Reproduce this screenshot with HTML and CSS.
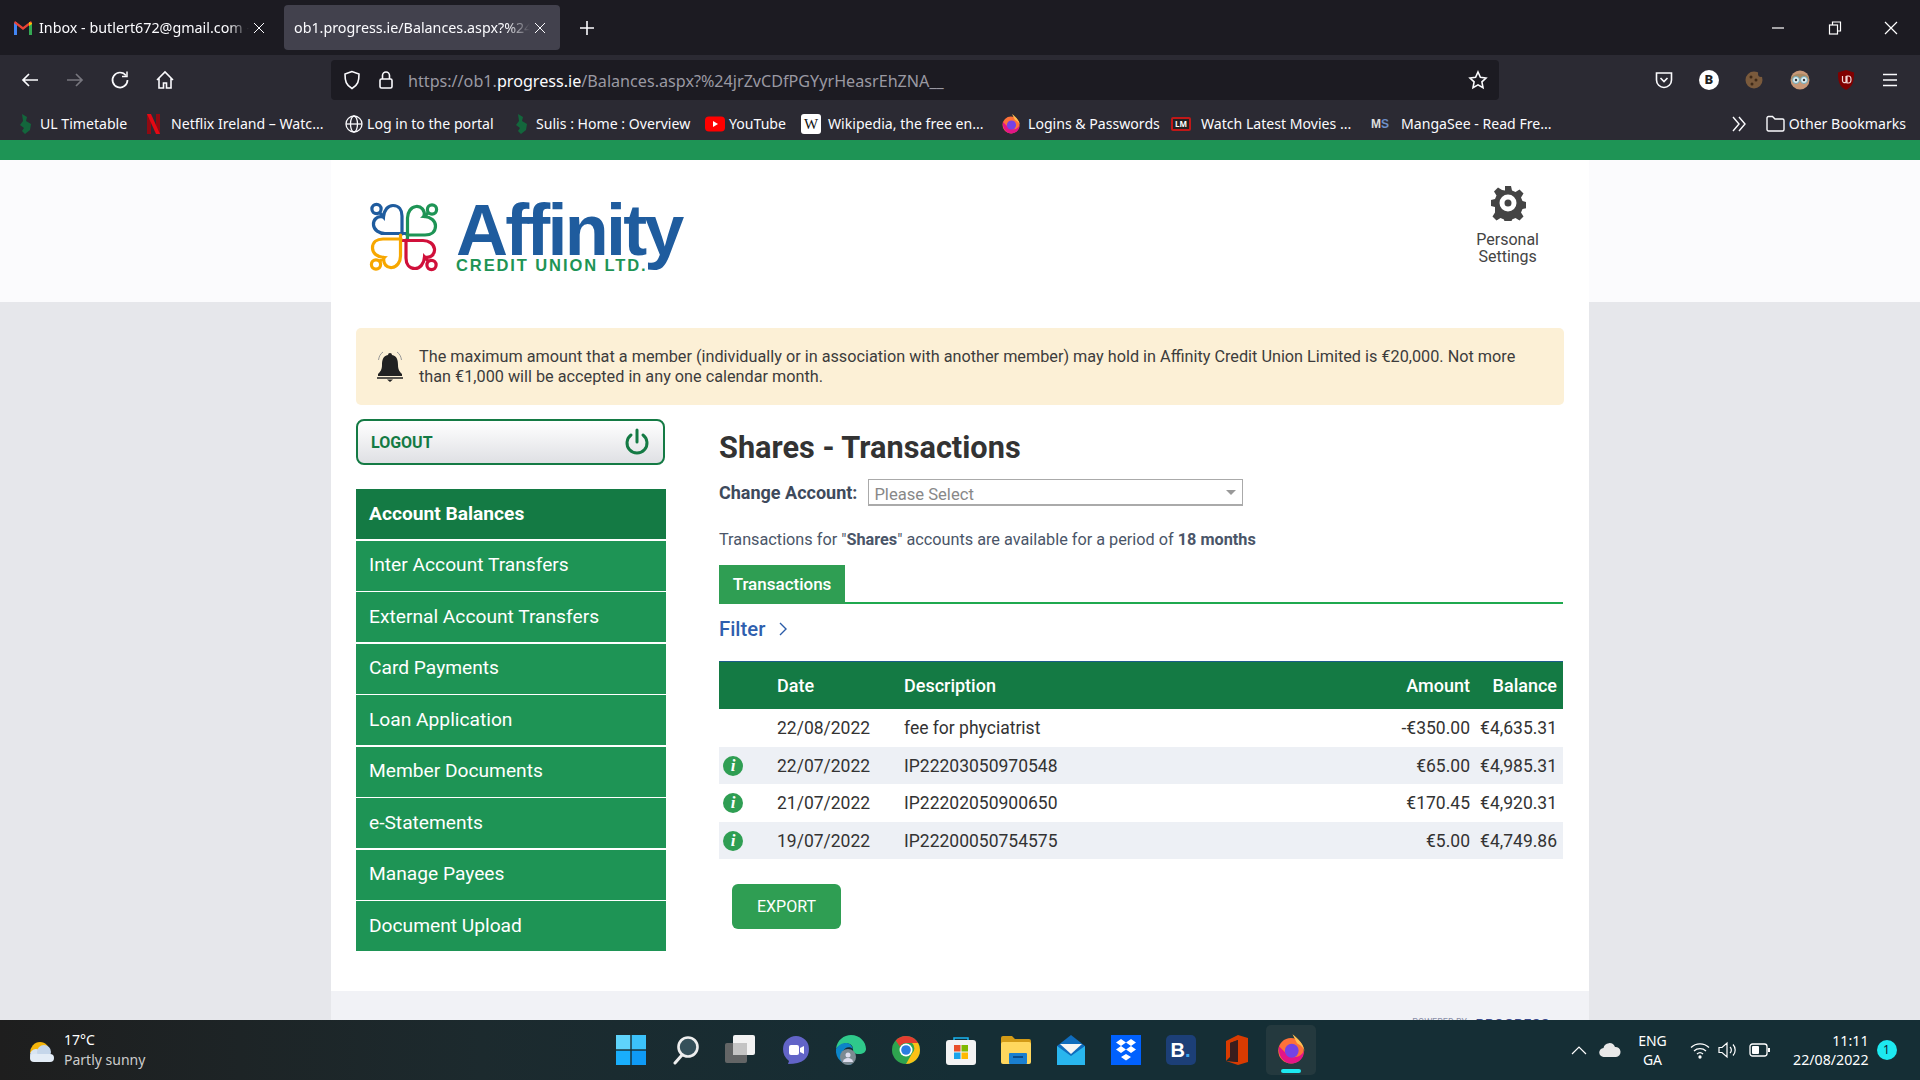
FILE: index.html
```html
<!DOCTYPE html>
<html lang="en">
<head>
    <meta charset="UTF-8">
    <title>Shares - Transactions</title>
    <link rel="stylesheet" href="styles.css">
</head>
<body>
    <svg class="defs" width="0" height="0">
        <defs>
            <g id="heart" fill="none" stroke-width="3.2" stroke-linecap="round">
                <circle cx="36.5" cy="37" r="4.6"/>
                <path d="M40 41 L43.5 45 C44 38 48 33.5 53 33.5 C59 33.5 62 38 62 44 L62 62"/>
                <path d="M43.5 45 C37 43.5 33 48 33.5 53 C34 58 39 61.5 45 61.5 L66 61.5"/>
            </g>
            <g id="ffox">
                <circle cx="10" cy="11" r="8.5" fill="#ff7139"/>
                <path d="M11 0 C15 3 19 7 19 12 C19 9 16 7 14 6 Z" fill="#ffbd4f"/>
                <path d="M2 8 C1 14 5 20 11 19.5 C16 19 19 15 18.5 11 C17 16 9 17 6 12 Z" fill="#e31587"/>
                <circle cx="10.5" cy="11" r="4.6" fill="#7542e5"/>
            </g>
            <path id="close" d="M1 1l10 10M11 1L1 11" stroke="#fbfbfe" stroke-width="1"/>
        </defs>
    </svg>

    <div class="tabbar">
        <div class="tab tab-first">
            <svg class="favicon" width="18" height="14" viewBox="0 0 18 14"><path d="M0 14V2l3-1v13z" fill="#4285f4"/><path d="M15 14V1l3 1v12z" fill="#34a853"/><path d="M0 2 9 9l9-7-1-2-8 6-8-6z" fill="#ea4335"/><path d="M15 1l3 1v1l-3 2z" fill="#fbbc04"/></svg>
            <span class="tab-title">Inbox - butlert672@gmail.com -</span>
            <svg class="tab-x" width="12" height="12" viewBox="0 0 12 12"><use href="#close"/></svg>
        </div>
        <div class="tab tab-active">
            <span class="tab-title">ob1.progress.ie/Balances.aspx?%24j</span>
            <svg class="tab-x" width="12" height="12" viewBox="0 0 12 12"><use href="#close"/></svg>
        </div>
        <svg class="newtab" width="14" height="14" viewBox="0 0 14 14"><path d="M7 0v14M0 7h14" stroke="#fbfbfe" stroke-width="1.6"/></svg>
        <div class="winctl">
            <svg width="14" height="14" viewBox="0 0 14 14"><path d="M1 7h12" stroke="#fff" stroke-width="1.2"/></svg>
            <svg width="14" height="14" viewBox="0 0 14 14" fill="none" stroke="#fff" stroke-width="1.2"><rect x="1.5" y="4" width="8" height="9"/><path d="M4.5 4V1h8v9h-3"/></svg>
            <svg width="14" height="14" viewBox="0 0 14 14"><path d="M1 1l12 12M13 1L1 13" stroke="#fff" stroke-width="1.2"/></svg>
        </div>
    </div>

    <div class="toolbar">
        <div class="navbtns">
            <svg width="20" height="20" viewBox="0 0 20 20" fill="none" stroke="#fbfbfe" stroke-width="1.7"><path d="M18 10H3M9 4l-6 6 6 6"/></svg>
            <svg width="20" height="20" viewBox="0 0 20 20" fill="none" stroke="#77767e" stroke-width="1.7"><path d="M2 10h15M11 4l6 6-6 6"/></svg>
            <svg width="20" height="20" viewBox="0 0 20 20" fill="none" stroke="#fbfbfe" stroke-width="1.7"><path d="M16 5.5A7.5 7.5 0 1 0 17.5 10"/><path d="M17 1.5v5h-5" stroke-width="1.5"/></svg>
            <svg width="20" height="20" viewBox="0 0 20 20" fill="none" stroke="#fbfbfe" stroke-width="1.6"><path d="M2 10 10 2l8 8M4 8.5V18h4.5v-5h3v5H16V8.5"/></svg>
        </div>
        <div class="urlbar">
            <svg width="18" height="20" viewBox="0 0 18 20" fill="none" stroke="#fbfbfe" stroke-width="1.6"><path d="M9 1.5 2 4c0 7 1 11 7 14.5C15 15 16 11 16 4z"/></svg>
            <svg width="16" height="20" viewBox="0 0 16 20" fill="none" stroke="#fbfbfe" stroke-width="1.6"><rect x="2" y="9" width="12" height="9" rx="1.5"/><path d="M4.5 9V5.5a3.5 3.5 0 0 1 7 0V9"/></svg>
            <span class="url">https://ob1.<b>progress.ie</b>/Balances.aspx?%24jrZvCDfPGYyrHeasrEhZNA__</span>
            <svg class="star" width="20" height="20" viewBox="0 0 20 20" fill="none" stroke="#fbfbfe" stroke-width="1.6"><path d="M10 2l2.4 5.3 5.6.7-4.1 3.9 1.1 5.8L10 14.9l-5 2.8 1.1-5.8L2 8l5.6-.7z"/></svg>
        </div>
        <div class="exticons">
            <svg width="20" height="20" viewBox="0 0 20 20" fill="none" stroke="#fbfbfe" stroke-width="1.6"><path d="M2.5 3h15v7a7.5 7.5 0 0 1-15 0z"/><path d="M6.5 8l3.5 3.5L13.500 8"/></svg>
            <span class="ext-b">B</span>
            <svg width="20" height="20" viewBox="0 0 20 20"><circle cx="10" cy="10" r="8.500" fill="#7a5a3c"/><circle cx="7" cy="7" r="1.500" fill="#3f2a18"/><circle cx="12" cy="10" r="1.500" fill="#3f2a18"/><circle cx="8" cy="14" r="1.500" fill="#3f2a18"/><circle cx="17" cy="4" r="3" fill="#2b2a33"/></svg>
            <svg width="22" height="22" viewBox="0 0 22 22"><circle cx="11" cy="11" r="9.500" fill="#c89878"/><path d="M2 10C3 3 19 3 20 10z" fill="#a98a64"/><circle cx="7" cy="11" r="3.500" fill="#dfeef2" stroke="#6fa9b8"/><circle cx="15" cy="11" r="3.500" fill="#dfeef2" stroke="#6fa9b8"/><circle cx="7" cy="11" r="1.200" fill="#333"/><circle cx="15" cy="11" r="1.200" fill="#333"/></svg>
            <svg width="20" height="22" viewBox="0 0 20 22"><path d="M10 1 18 3.500c0 9-1 14-8 17.500C3 17.500 2 12.500 2 3.500z" fill="#800000"/><path d="M6.500 7v5a2 2 0 0 0 3.500 1V7M11 7v7h1.500a2.500 3.500 0 0 0 0-7z" fill="none" stroke="#f3d6d6" stroke-width="1.200"/></svg>
            <svg width="18" height="16" viewBox="0 0 18 16"><path d="M2 2.500h14M2 8h14M2 13.500h14" stroke="#fbfbfe" stroke-width="1.700"/></svg>
        </div>
    </div>

    <div class="bookmarks">
        <span class="bm"><svg width="15" height="22" viewBox="0 0 15 22"><path d="M4 1 9 4l-1 4 5 3-1 6-5 4-3-3 2-3-4-3 3-4z" fill="#13663c"/></svg>UL Timetable</span>
        <span class="bm bm-netflix"><svg width="13" height="20" viewBox="0 0 13 20"><path d="M0 0h4v20H0zM9 0h4v20H9z" fill="#8f0a12"/><path d="M0 0h4l9 20H9z" fill="#e50914"/></svg>Netflix Ireland – Watc...</span>
        <span class="bm bm-tight"><svg width="18" height="18" viewBox="0 0 18 18" fill="none" stroke="#fbfbfe" stroke-width="1.300"><circle cx="9" cy="9" r="8"/><ellipse cx="9" cy="9" rx="3.500" ry="8"/><path d="M1 9h16"/></svg>Log in to the portal</span>
        <span class="bm"><svg width="15" height="22" viewBox="0 0 15 22"><path d="M4 1 9 4l-1 4 5 3-1 6-5 4-3-3 2-3-4-3 3-4z" fill="#13663c"/></svg>Sulis : Home : Overview</span>
        <span class="bm bm-tight"><svg width="20" height="16" viewBox="0 0 20 16"><rect width="20" height="15" y=".5" rx="4" fill="#f00"/><path d="M8 5l5 3-5 3z" fill="#fff"/></svg>YouTube</span>
        <span class="bm"><span class="wiki">W</span>Wikipedia, the free en...</span>
        <span class="bm"><svg width="20" height="20" viewBox="0 0 20 20"><use href="#ffox"/></svg>Logins &amp; Passwords</span>
        <span class="bm"><span class="lm">LM</span>Watch Latest Movies ...</span>
        <span class="bm"><span class="ms">M<i>S</i></span>MangaSee - Read Fre...</span>
        <span class="bm-right">
            <svg width="16" height="16" viewBox="0 0 16 16" fill="none" stroke="#fbfbfe" stroke-width="1.400"><path d="M2 1l6 7-6 7M8 1l6 7-6 7"/></svg>
            <svg class="folder" width="19" height="17" viewBox="0 0 19 17" fill="none" stroke="#fbfbfe" stroke-width="1.400"><path d="M1 3a1.500 1.500 0 0 1 1.500-1.500h4L9 4h7.500A1.500 1.500 0 0 1 18 5.500v9a1.500 1.500 0 0 1-1.500 1.500h-14A1.500 1.500 0 0 1 1 14.500z"/></svg>
            Other Bookmarks
        </span>
    </div>

    <div class="page">
        <div class="wrapper">
            <header class="site-head">
                <div class="logo">
                    <svg class="logo-mark" width="72" height="72" viewBox="28 28 72 72">
                        <use href="#heart" stroke="#1f5c9e"/>
                        <use href="#heart" stroke="#1e9455" transform="rotate(90 64 65)"/>
                        <use href="#heart" stroke="#d0103a" transform="rotate(180 64 65)"/>
                        <use href="#heart" stroke="#f7a700" transform="rotate(270 64 65)"/>
                    </svg>
                    <div class="logo-text">
                        <div class="logo-name">Affinity</div>
                        <div class="logo-sub">CREDIT UNION LTD.</div>
                    </div>
                </div>
                <div class="settings">
                    <svg width="36" height="36" viewBox="0 0 36 36"><path fill="#444" fill-rule="evenodd" d="M15 1h6l1 4.500 3.500 1.500 4-2.500 4 4-2.500 4 1.500 3.500 4 1v6l-4 1-1.500 3.500 2.500 4-4 4-4-2.500-3.500 1.500-1 4h-6l-1-4-3.500-1.500-4 2.500-4-4 2.500-4L5 22l-4-1v-6l4-1 1.500-3.500-2.500-4 4-4 4 2.500L15 5.500zM18 9.500a8.500 8.500 0 1 0 0 17 8.500 8.500 0 0 0 0-17zM18 14.500a3.500 3.500 0 1 1 0 7 3.500 3.500 0 0 1 0-7z"/></svg>
                    <div class="settings-label">Personal<br>Settings</div>
                </div>
            </header>

            <div class="content">
                <div class="alert">
                    <svg class="bell" width="32" height="34" viewBox="0 0 32 34"><path d="M16 3a2 2 0 0 1 2 2c5 1 6 5 6 10 0 5 2 7 4 9v2H4v-2c2-2 4-4 4-9 0-5 1-9 6-10a2 2 0 0 1 2-2z" fill="#222"/><path d="M3 28h26" stroke="#222" stroke-width="1.500"/><path d="M13 29.500h6l-3 2.500z" fill="#222"/><path d="M9 2C6 4 5 7 4.500 10M23 2c3 2 4 5 4.500 8" fill="none" stroke="#999" stroke-width="1"/></svg>
                    <p>The maximum amount that a member (individually or in association with another member) may hold in Affinity Credit Union Limited is €20,000. Not more than €1,000 will be accepted in any one calendar month.</p>
                </div>

                <div class="columns">
                    <aside class="side">
                        <div class="logout">
                            <span>LOGOUT</span>
                            <svg width="26" height="28" viewBox="0 0 26 28" fill="none" stroke="#147a44" stroke-width="3" stroke-linecap="round"><path d="M13 2v12"/><path d="M7 7a10 10 0 1 0 12 0"/></svg>
                        </div>
                        <nav class="menu">
                            <a class="menu-item menu-active">Account Balances</a>
                            <a class="menu-item">Inter Account Transfers</a>
                            <a class="menu-item">External Account Transfers</a>
                            <a class="menu-item">Card Payments</a>
                            <a class="menu-item">Loan Application</a>
                            <a class="menu-item">Member Documents</a>
                            <a class="menu-item">e-Statements</a>
                            <a class="menu-item">Manage Payees</a>
                            <a class="menu-item">Document Upload</a>
                        </nav>
                    </aside>

                    <main class="main">
                        <h1>Shares - Transactions</h1>
                        <div class="account-row">
                            <label>Change Account:</label>
                            <div class="select">Please Select<span class="caret"></span></div>
                        </div>
                        <p class="note">Transactions for "<b>Shares</b>" accounts are available for a period of <b>18 months</b></p>
                        <div class="tabs"><span class="tabs-item">Transactions</span></div>
                        <div class="filter">Filter <svg width="12" height="18" viewBox="0 0 12 18" fill="none" stroke="#2a5ba8" stroke-width="1.400"><path d="M3 3l6 6-6 6"/></svg></div>
                        <table class="tx">
                            <thead>
                                <tr><th class="c-info"></th><th class="c-date">Date</th><th>Description</th><th class="c-amt">Amount</th><th class="c-bal">Balance</th></tr>
                            </thead>
                            <tbody>
                                <tr><td></td><td>22/08/2022</td><td>fee for phyciatrist</td><td class="c-amt">-€350.00</td><td class="c-bal">€4,635.31</td></tr>
                                <tr><td><span class="info">i</span></td><td>22/07/2022</td><td>IP22203050970548</td><td class="c-amt">€65.00</td><td class="c-bal">€4,985.31</td></tr>
                                <tr><td><span class="info">i</span></td><td>21/07/2022</td><td>IP22202050900650</td><td class="c-amt">€170.45</td><td class="c-bal">€4,920.31</td></tr>
                                <tr><td><span class="info">i</span></td><td>19/07/2022</td><td>IP22200050754575</td><td class="c-amt">€5.00</td><td class="c-bal">€4,749.86</td></tr>
                            </tbody>
                        </table>
                        <button class="export">EXPORT</button>
                    </main>
                </div>
            </div>

            <footer class="site-foot">
                <span class="powered">POWERED BY</span>
                <b class="powered-name">PROGRESS</b>
            </footer>
        </div>
    </div>

    <div class="taskbar">
        <div class="weather">
            <svg width="30" height="26" viewBox="0 0 30 26"><path d="M5 16a10 11 0 0 1 20 0z" fill="#f5b50a"/><circle cx="11" cy="18" r="6" fill="#d8e4f2"/><circle cx="19" cy="15" r="7" fill="#c5d6ea"/><rect x="5" y="17" width="24" height="8" rx="4" fill="#e3ecf6"/></svg>
            <div class="weather-text"><div>17°C</div><div class="weather-sub">Partly sunny</div></div>
        </div>
        <div class="apps">
            <span class="app"><svg width="30" height="30" viewBox="0 0 30 30"><rect width="14.300" height="14.300" fill="#5fd4fb"/><rect x="15.700" width="14.300" height="14.300" fill="#3cc2fa"/><rect y="15.700" width="14.300" height="14.300" fill="#19aefc"/><rect x="15.700" y="15.700" width="14.300" height="14.300" fill="#0f9af5"/></svg></span>
            <span class="app"><svg width="28" height="30" viewBox="0 0 28 30"><circle cx="16" cy="12" r="9.500" fill="#35505a" stroke="#eee" stroke-width="2.600"/><path d="M10 20 3 28" stroke="#eee" stroke-width="3" stroke-linecap="round"/></svg></span>
            <span class="app"><svg width="32" height="30" viewBox="0 0 32 30"><rect x="8" width="22" height="20" rx="2" fill="#f2f2f2"/><rect y="8" width="22" height="20" rx="2" fill="#6c6c6c" opacity=".9"/><rect x="8" y="8" width="14" height="12" fill="#c4c4c4"/></svg></span>
            <span class="app"><svg width="28" height="30" viewBox="0 0 28 30"><path d="M14 1a13 13 0 0 1 13 13c0 9-6 15-21 15l1-3C3 23 1 19 1 14A13 13 0 0 1 14 1z" fill="#6264c7"/><rect x="7" y="10" width="10" height="10" rx="2" fill="#fff"/><path d="M18 13l4-2v8l-4-2z" fill="#fff"/></svg></span>
            <span class="app"><svg width="32" height="32" viewBox="0 0 32 32"><path d="M1 15C2 6 9 1 16 1c9 0 15 7 15 14 0 3-3 5-7 5-5 0-6-2-6-5 0-5-6-7-10-5-4 2-6 3-7 5z" fill="#2fc98b"/><path d="M1 15c2-3 5-6 10-6 3 0 6 2 7 6-3-3-9-2-10 3-1 6 4 11 9 13C8 31 0 25 1 15z" fill="#0c84c8"/><circle cx="13" cy="23" r="8" fill="#7c8a92"/><circle cx="13" cy="21" r="2.500" fill="#dde"/><path d="M8 28a5 4 0 0 1 10 0z" fill="#dde"/></svg></span>
            <span class="app"><svg width="28" height="28" viewBox="0 0 28 28"><circle cx="14" cy="14" r="14" fill="#2ea44f"/><path d="M14 0a14 14 0 0 1 12.100 7H14a7 7 0 0 0-6.100 3.500L3.700 4.500A14 14 0 0 1 14 0z" fill="#e53d30"/><path d="M26.100 7A14 14 0 0 1 14 28l6-10.500A7 7 0 0 0 20 7z" fill="#fbc116"/><circle cx="14" cy="14" r="6.500" fill="#fff"/><circle cx="14" cy="14" r="4.800" fill="#2a7de1"/></svg></span>
            <span class="app"><svg width="30" height="30" viewBox="0 0 30 30"><path d="M8 6V3h14v3" fill="none" stroke="#19b5f1" stroke-width="1.500"/><rect y="5" width="30" height="25" rx="3" fill="#f3f3f3"/><rect x="8" y="10" width="6.500" height="6.500" fill="#e8502a"/><rect x="15.500" y="10" width="6.500" height="6.500" fill="#7fb900"/><rect x="8" y="17.500" width="6.500" height="6.500" fill="#19a4ea"/><rect x="15.500" y="17.500" width="6.500" height="6.500" fill="#ffb900"/></svg></span>
            <span class="app"><svg width="30" height="28" viewBox="0 0 30 28"><path d="M0 2a2 2 0 0 1 2-2h9l3 3h14a2 2 0 0 1 2 2v3H0z" fill="#d39b17"/><rect y="6" width="30" height="22" rx="2" fill="#ffd75e"/><rect x="8" y="17" width="18" height="11" rx="1" fill="#1a7fd0"/><path d="M12 21h10" stroke="#0c4c8a" stroke-width="2"/></svg></span>
            <span class="app"><svg width="30" height="30" viewBox="0 0 30 30"><path d="M15 0 29 11v19H1V11z" fill="#0f6cbd"/><path d="M4 9h22L15 19z" fill="#f5f5f5"/><path d="M1 11l14 10 14-10v19H1z" fill="#29b6ee"/></svg></span>
            <span class="app"><svg width="30" height="30" viewBox="0 0 30 30"><rect width="30" height="30" fill="#0061fe"/><path d="M10 4l5 3.500-5 3.500-5-3.500zM20 4l5 3.500-5 3.500-5-3.500zM10 11l5 3.500-5 3.500-5-3.500zM20 11l5 3.500-5 3.500-5-3.500zM15 19l5 3-5 3.500-5-3.500z" fill="#fff"/></svg></span>
            <span class="app"><span class="booking">B<i>.</i></span></span>
            <span class="app"><svg width="24" height="30" viewBox="0 0 24 30"><path d="M14 0 24 3v24l-10 3-12-4 12 1V5L6 8v14l-4 4V6z" fill="#d83b01"/><path d="M6 8l8-3v22l-8-1z" fill="#3a1d1d"/></svg></span>
            <span class="app app-on"><svg width="30" height="32" viewBox="0 0 20 21"><use href="#ffox"/></svg><span class="app-dot"></span></span>
        </div>
        <div class="tray">
            <svg class="tray-up" width="16" height="10" viewBox="0 0 16 10" fill="none" stroke="#fff" stroke-width="1.200"><path d="M1 9l7-7 7 7"/></svg>
            <svg class="tray-cloud" width="22" height="14" viewBox="0 0 22 14"><path d="M5 14a4.500 4.500 0 0 1-.5-9A6 6 0 0 1 16 4a5 5 0 0 1 1 10z" fill="#e8e8e8"/></svg>
            <div class="lang">ENG<br>GA</div>
            <svg class="tray-wifi" width="20" height="18" viewBox="0 0 20 18" fill="none" stroke="#fff" stroke-width="1.300"><path d="M1 6.500a13 13 0 0 1 18 0M4 10a9 9 0 0 1 12 0M7 13a4.500 4.500 0 0 1 6 0"/><circle cx="10" cy="16" r="1" fill="#fff"/></svg>
            <svg class="tray-vol" width="20" height="18" viewBox="0 0 20 18" fill="none" stroke="#fff" stroke-width="1.200"><path d="M1 6.500h3L9 2v14l-5-4.500H1zM12 6a4 4 0 0 1 0 6M15 3.500a8 8 0 0 1 0 11"/></svg>
            <svg class="tray-bat" width="22" height="14" viewBox="0 0 22 14"><rect x="1" y="1" width="17" height="12" rx="2.500" fill="none" stroke="#fff" stroke-width="1.300"/><rect x="3" y="3" width="7" height="8" rx="1" fill="#fff"/><rect x="19" y="5" width="2" height="4" fill="#fff"/></svg>
            <div class="clock">11:11<br>22/08/2022</div>
            <span class="badge">1</span>
        </div>
    </div>
</body>
</html>
```

FILE: styles.css
```css
* {
    box-sizing: border-box;
}
html, body {
    height: 100%;
}
body {
    margin: 0;
    display: flex;
    flex-direction: column;
    overflow: hidden;
    font-family: Roboto, "Liberation Sans", sans-serif;
    color: #333;
}
.defs {
    position: absolute;
}
svg {
    display: block;
    flex-shrink: 0;
}

/* browser chrome */
.tabbar {
    height: 55px;
    flex-shrink: 0;
    display: flex;
    align-items: center;
    background: #1c1b22;
    color: #fbfbfe;
    font-family: "Noto Sans", sans-serif;
    font-size: 14.3px;
}
.tab {
    width: 276px;
    height: 45px;
    padding: 0 14px 0 10px;
    display: flex;
    align-items: center;
    border-radius: 4px;
}
.tab-first {
    width: 284px;
    padding: 0 19px 0 14px;
}
.tab-active {
    background: #42414d;
}
.tab-title {
    flex: 1;
    min-width: 0;
    white-space: nowrap;
    overflow: hidden;
    -webkit-mask-image: linear-gradient(to right, #000 90%, transparent);
    mask-image: linear-gradient(to right, #000 90%, transparent);
}
.favicon {
    margin-right: 7px;
}
.tab-x {
    margin-left: 4px;
}
.newtab {
    margin-left: 20px;
}
.winctl {
    margin-left: auto;
    width: 149px;
    padding-right: 22px;
    display: flex;
    justify-content: space-between;
}
.toolbar {
    height: 50px;
    flex-shrink: 0;
    display: flex;
    align-items: center;
    background: #2b2a33;
}
.navbtns {
    width: 331px;
    padding: 0 156px 0 20px;
    display: flex;
    justify-content: space-between;
}
.urlbar {
    width: 1168px;
    height: 40px;
    padding: 0 11px 0 12px;
    display: flex;
    align-items: center;
    gap: 17px;
    border-radius: 4px;
    background: #1c1b22;
}
.url {
    margin: 2px 0 0 -3px;
    font-family: "Noto Sans", sans-serif;
    font-size: 16.15px;
    color: #9a99a2;
    white-space: nowrap;
}
.url b {
    font-weight: 400;
    color: #fbfbfe;
}
.star {
    margin-left: auto;
}
.exticons {
    flex: 1;
    padding: 0 21px 0 155px;
    display: flex;
    align-items: center;
    justify-content: space-between;
}
.ext-b {
    width: 20px;
    height: 20px;
    border-radius: 50%;
    background: #fff;
    color: #222;
    font-size: 13px;
    font-weight: 900;
    line-height: 20px;
    text-align: center;
}
.bookmarks {
    height: 35px;
    flex-shrink: 0;
    padding: 2px 0 0 18px;
    display: grid;
    grid-template-columns: 129px 198px 169px 191px 96px 200px 170px 200px 1fr auto;
    align-items: center;
    background: #2b2a33;
    color: #fbfbfe;
    font-family: "Noto Sans", sans-serif;
    font-size: 14.1px;
    white-space: nowrap;
}
.bm {
    display: flex;
    align-items: center;
    gap: 7px;
}
.bm-netflix {
    gap: 11px;
}
.bm-tight {
    gap: 4px;
}
.wiki {
    width: 20px;
    height: 20px;
    border-radius: 3px;
    background: #fff;
    color: #111;
    font-family: "Liberation Serif", serif;
    font-size: 15px;
    line-height: 20px;
    text-align: center;
}
.lm {
    width: 20px;
    height: 14px;
    margin-right: 3px;
    border: 2px solid #c01818;
    border-radius: 2px;
    background: #222;
    color: #fff;
    font-size: 8px;
    font-weight: 700;
    line-height: 10px;
    text-align: center;
}
.ms {
    width: 20px;
    margin-right: 3px;
    color: #ddd;
    font-family: "Liberation Sans", sans-serif;
    font-size: 12px;
    font-weight: 700;
}
.ms i {
    color: #6d8fc7;
    font-style: normal;
}
.bm-right {
    grid-column: 10;
    padding-right: 14px;
    display: flex;
    align-items: center;
}
.folder {
    margin: 0 4px 0 19px;
}

/* page */
.page {
    flex: 1;
    min-height: 0;
    overflow: hidden;
    border-top: 20px solid #1e9455;
    background: linear-gradient(#fbfbfd 142px, #e6e7eb 142px);
}
.wrapper {
    width: 1258px;
    margin: 0 auto 0 331px;
    background: #fff;
}
.site-head {
    height: 142px;
    padding: 40px 50px 0 37px;
    display: flex;
    justify-content: space-between;
}
.logo {
    display: flex;
    gap: 16px;
}
.logo-text {
    font-family: "Liberation Sans", sans-serif;
    font-weight: 700;
}
.logo-name {
    height: 58px;
    margin-top: -6px;
    color: #1f5c9e;
    font-size: 72px;
    line-height: 72px;
    letter-spacing: -2.8px;
}
.logo-sub {
    margin-top: 5px;
    color: #1e9455;
    font-size: 16.5px;
    line-height: 16px;
    letter-spacing: 1.9px;
}
.settings {
    margin-top: -15px;
    display: flex;
    flex-direction: column;
    align-items: center;
    color: #444;
    font-size: 16px;
    line-height: 17px;
    text-align: center;
}
.settings-label {
    margin-top: 10px;
}
.content {
    height: 689px;
    padding: 26px 25px 0;
}
.alert {
    height: 77px;
    padding: 0 30px 0 18px;
    display: flex;
    align-items: center;
    gap: 13px;
    border-radius: 5px;
    background: #fcf0d6;
    color: #3c3c3c;
    font-size: 16.24px;
    line-height: 20px;
}
.alert p {
    margin: 0;
}
.columns {
    margin-top: 14px;
    display: flex;
    gap: 53px;
}
.side {
    width: 310px;
    flex-shrink: 0;
}
.logout {
    width: 309px;
    height: 46px;
    padding: 0 13px;
    display: flex;
    align-items: center;
    justify-content: space-between;
    border: 2px solid #147a44;
    border-radius: 8px;
    background: linear-gradient(#fff, #dfe0e4);
    color: #147a44;
    font-size: 16px;
    font-weight: 700;
}
.menu {
    margin-top: 24px;
}
.menu-item {
    height: 50px;
    margin-bottom: 1.5px;
    padding: 0 0 2px 13px;
    display: flex;
    align-items: center;
    background: #1e9455;
    color: #fff;
    font-size: 19.2px;
}
.menu-active {
    background: #147a44;
    font-weight: 700;
}
.main {
    width: 844px;
    flex-shrink: 0;
    padding-top: 11px;
}
h1 {
    margin: 0;
    color: #333;
    font-size: 30.7px;
    font-weight: 700;
    line-height: 36px;
}
.account-row {
    margin-top: 13px;
    display: flex;
    align-items: center;
    gap: 11px;
}
.account-row label {
    color: #3e4a5c;
    font-size: 18px;
    font-weight: 700;
}
.select {
    width: 375px;
    height: 27px;
    padding-left: 5px;
    position: relative;
    border: 1px solid #aaa;
    border-bottom-width: 2px;
    color: #888;
    font-size: 16.6px;
    line-height: 29px;
}
.caret {
    position: absolute;
    right: 6px;
    top: 10px;
    border: 5px solid transparent;
    border-top: 5px solid #999;
    border-bottom: 0;
}
.note {
    margin: 24px 0 0;
    color: #4a5568;
    font-size: 16.25px;
    line-height: 20px;
}
.tabs {
    height: 39px;
    margin-top: 15px;
    border-bottom: 2px solid #1fa94f;
}
.tabs-item {
    width: 126px;
    height: 39px;
    display: block;
    background: #2f9e53;
    color: #fff;
    font-size: 17px;
    font-weight: 500;
    line-height: 39px;
    text-align: center;
}
.filter {
    margin-top: 13px;
    display: flex;
    align-items: center;
    gap: 12px;
    color: #2f5fae;
    font-size: 20.3px;
    font-weight: 500;
    line-height: 24px;
}
.tx {
    width: 100%;
    margin-top: 20px;
    border-collapse: collapse;
    table-layout: fixed;
    font-size: 18px;
}
.tx th {
    height: 47.5px;
    padding: 0;
    border-top: 1px solid #1c5c8a;
    background: #147a44;
    color: #fff;
    font-weight: 500;
    text-align: left;
}
.tx td {
    height: 37.5px;
    padding: 1px 0 0;
    color: #333;
    font-size: 17.5px;
}
.tx tbody tr:nth-child(even) td {
    background: #edf0f5;
}
.c-info {
    width: 58px;
}
.c-date {
    width: 127px;
}
.tx .c-amt {
    width: 120px;
    padding-right: 6px;
    text-align: right;
}
.tx .c-bal {
    width: 87px;
    padding-right: 6px;
    text-align: right;
}
.info {
    width: 20px;
    height: 20px;
    margin-left: 4px;
    display: block;
    border-radius: 50%;
    background: #2f9e53;
    color: #fff;
    font-family: "Liberation Serif", serif;
    font-size: 17px;
    font-style: italic;
    font-weight: 700;
    line-height: 20px;
    text-align: center;
}
.export {
    width: 109px;
    height: 45px;
    margin: 25px 0 0 13px;
    display: block;
    border: 0;
    border-radius: 6px;
    background: #2f9e53;
    color: #fff;
    font-family: Roboto, sans-serif;
    font-size: 16px;
}
.site-foot {
    height: 60px;
    padding: 26px 39px 0 0;
    display: flex;
    justify-content: flex-end;
    align-items: flex-start;
    gap: 9px;
    background: #f1f2f6;
}
.powered {
    color: #8a8fa8;
    font-size: 9px;
    line-height: 11px;
}
.powered-name {
    color: #3a4a8c;
    font-size: 13px;
    line-height: 14px;
    letter-spacing: 1px;
}

/* windows taskbar */
.taskbar {
    height: 60px;
    flex-shrink: 0;
    display: flex;
    align-items: center;
    background: linear-gradient(to right, #1e1e1e, #1c2a2e 25%, #152e35 50%, #152e35);
    color: #fff;
    font-family: "Noto Sans", sans-serif;
    position: relative;
}
.weather {
    width: 603px;
    padding-left: 25px;
    display: flex;
    align-items: center;
    gap: 9px;
    font-size: 14px;
    line-height: 20px;
}
.weather-sub {
    color: #ccc;
}
.apps {
    display: flex;
}
.app {
    width: 55px;
    height: 50px;
    display: flex;
    align-items: center;
    justify-content: center;
    position: relative;
}
.app-on {
    width: 50px;
    margin-left: 2.5px;
    border-radius: 5px;
    background: #24393e;
}
.app-dot {
    width: 20px;
    height: 4px;
    position: absolute;
    bottom: 2px;
    left: 15px;
    border-radius: 2px;
    background: #1de9f0;
}
.booking {
    width: 30px;
    height: 30px;
    border-radius: 5px;
    background: #1c3f77;
    font-family: "Liberation Sans", sans-serif;
    font-size: 20px;
    font-weight: 700;
    line-height: 30px;
    text-align: center;
}
.booking i {
    color: #3ba4f0;
    font-style: normal;
}
.tray {
    flex: 1;
    display: flex;
    align-items: center;
    padding-left: 255px;
    font-size: 14px;
    line-height: 19px;
}
.tray-cloud {
    margin-left: 12px;
}
.lang {
    width: 40px;
    margin-left: 12px;
    text-align: center;
}
.tray-wifi {
    margin-left: 17px;
}
.tray-vol {
    margin-left: 8px;
}
.tray-bat {
    margin-left: 11px;
}
.clock {
    width: 98px;
    font-size: 14.2px;
    text-align: right;
}
.badge {
    width: 20px;
    height: 20px;
    margin-left: 8px;
    border-radius: 50%;
    background: #1de9f0;
    color: #123;
    font-size: 12px;
    line-height: 20px;
    text-align: center;
}
```
